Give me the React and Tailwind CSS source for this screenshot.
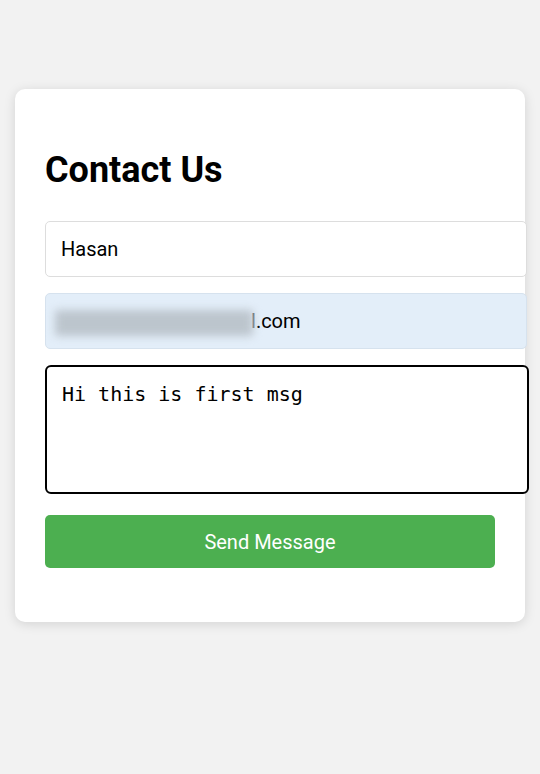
import React from "react";

const App = () => {
	return (
		<div className="w-full min-h-[774px] bg-[#f2f2f2] pt-[89px] px-[15px] font-['Roboto',sans-serif]">
			<div className="w-[510px] bg-white rounded-[10px] shadow-[0_2px_12px_rgba(0,0,0,0.13)] px-[30px] pt-[30px] pb-[54px]">
				<h1 className="mt-[30px] mb-[30px] text-[36px] leading-[42px] font-bold text-black">
					Contact Us
				</h1>
				<div className="flex flex-col">
					<input
						type="text"
						readOnly
						value="Hasan"
						className="box-content w-[450px] h-[24px] px-[15px] py-[15px] border border-[#dddddd] rounded-[5px] text-[20px] leading-[24px] text-black bg-white outline-none font-['Roboto',sans-serif]"
					/>
					<div className="box-content w-[450px] h-[24px] mt-[16px] px-[15px] py-[15px] border border-[#d6e2ee] rounded-[5px] bg-[#e3eef9] text-[20px] leading-[24px] text-black flex items-center">
						<span className="relative inline-block w-[190px] h-[24px]">
							<span className="absolute left-[-6px] top-[1px] w-[198px] h-[26px] bg-[#bcc5cd] blur-[4px] rounded-[3px]"></span>
						</span>
						<span className="text-[#555]">l</span>
						<span>.com</span>
					</div>
					<textarea
						readOnly
						value="Hi this is first msg"
						className="box-content w-[450px] h-[95px] mt-[16px] px-[15px] py-[15px] border-2 border-black rounded-[6px] text-[20px] leading-[24px] text-black bg-white outline-none resize-none font-['DejaVu_Sans_Mono',monospace]"
					/>
					<button className="w-[450px] h-[53px] mt-[21px] bg-[#4caf50] text-white text-[20px] rounded-[5px] font-['Roboto',sans-serif]">
						Send Message
					</button>
				</div>
			</div>
		</div>
	);
};

export default App;
